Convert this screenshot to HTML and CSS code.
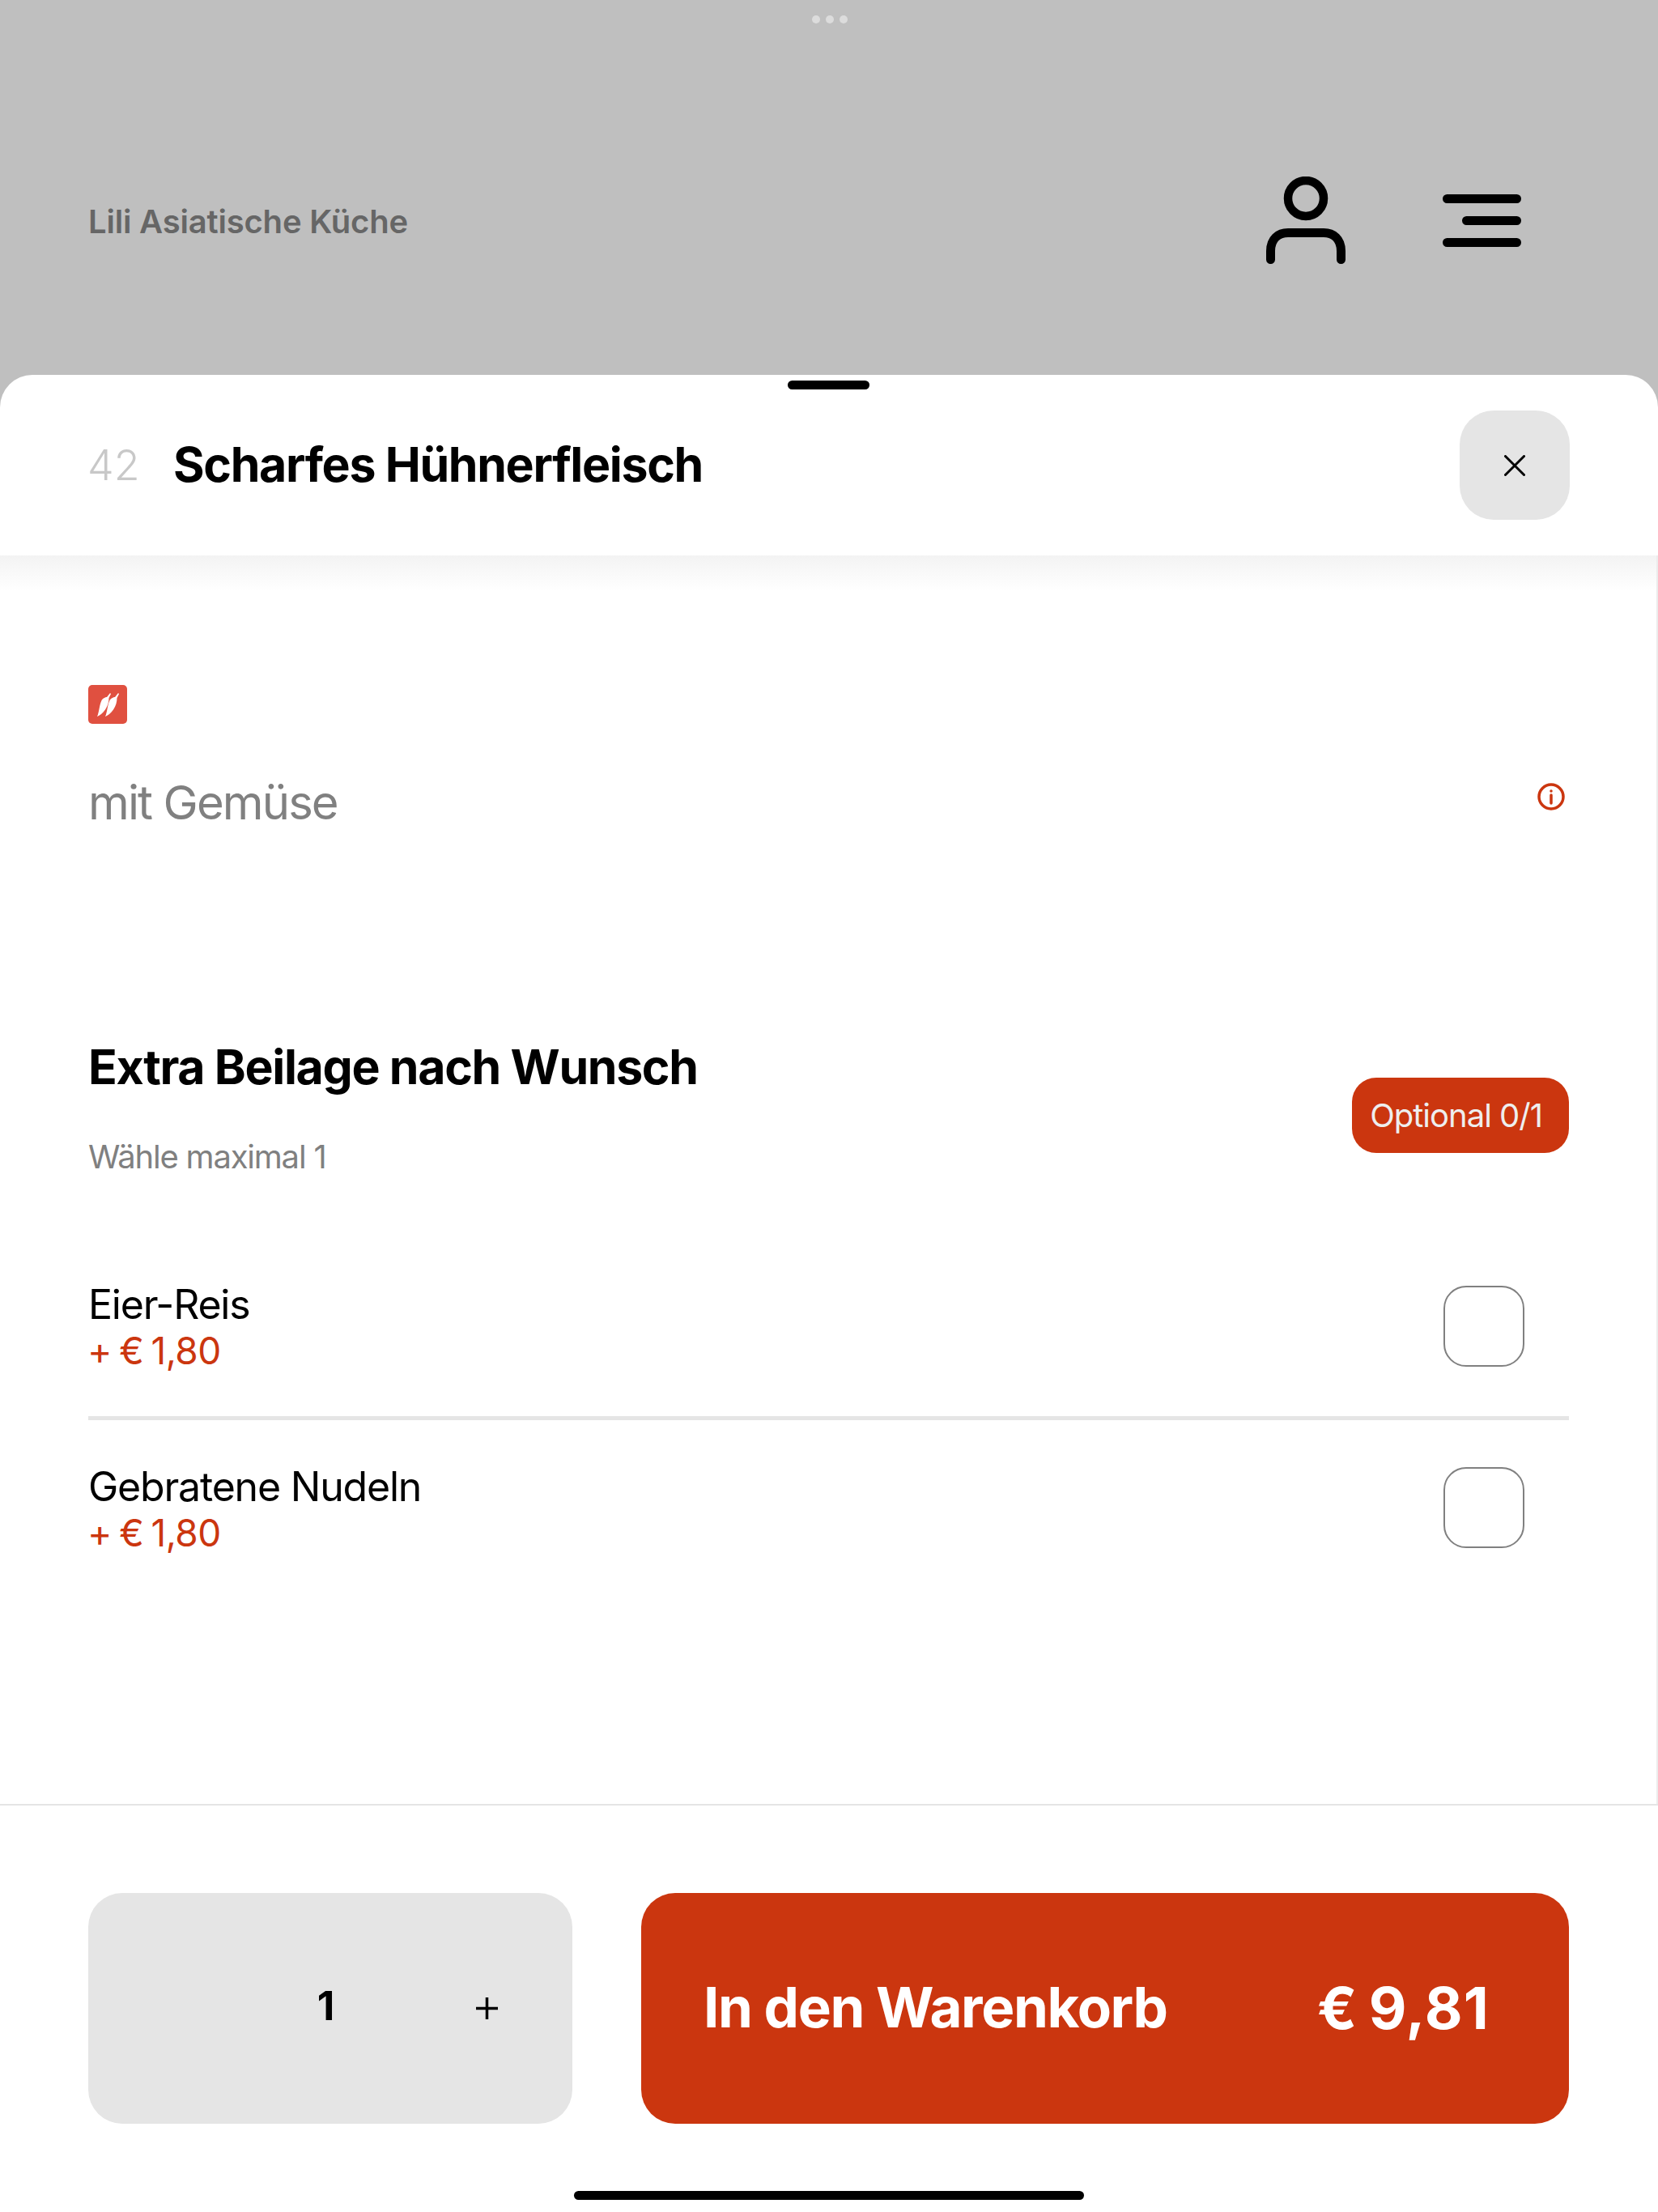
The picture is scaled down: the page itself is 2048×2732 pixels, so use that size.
FILE: index.html
```html
<!DOCTYPE html>
<html lang="de">
<head>
  <meta charset="UTF-8">
  <title>Lili Asiatische Küche</title>
  <link rel="stylesheet" href="styles.css">
</head>
<body>
  <!-- Multitasking dots -->
  <div class="window-dots"><span></span><span></span><span></span></div>

  <!-- Restaurant bar behind the sheet -->
  <header class="top-bar">
    <span class="restaurant-name">Lili Asiatische Küche</span>
    <div class="top-icons">
      <svg class="icon-user" width="98" height="108" viewBox="0 0 98 108" fill="none" stroke="#000" stroke-linecap="round">
        <circle cx="49" cy="27" r="22" stroke-width="10.5"/>
        <path d="M5.500 102.500V92C5.500 77 15 69.500 27 69.500H71C83 69.500 92.500 77 92.500 92V102.500" stroke-width="11"/>
      </svg>
      <svg class="icon-menu" width="97" height="65" viewBox="0 0 97 65" fill="none" stroke="#000" stroke-width="11" stroke-linecap="round">
        <path d="M5.500 5.500H91.500M29.500 32.500H91.500M5.500 59.500H91.500"/>
      </svg>
    </div>
  </header>

  <!-- Product sheet -->
  <main class="sheet">
    <div class="sheet-handle"></div>
    <div class="sheet-header">
      <span class="item-number">42</span>
      <h1 class="item-title">Scharfes Hühnerfleisch</h1>
      <button class="close-btn" aria-label="Schließen">
        <svg width="26" height="26" viewBox="0 0 26 26" fill="none" stroke="#000" stroke-width="3" stroke-linecap="round">
          <path d="M1.500 1.500L24.500 24.500M24.500 1.500L1.500 24.500"/>
        </svg>
      </button>
    </div>

    <div class="sheet-body">
      <div class="spicy-badge">
        <svg width="48" height="48" viewBox="0 0 48 48" fill="#fff">
          <path id="chili" d="M11 39C13.500 34 13.500 25 16.500 19C17.500 17 21 15 23 15L27 10L28 11L25.500 16C25.500 21 24 26 21 30.500C18 34.500 14 38 11 39Z"/>
          <use href="#chili" x="10"/>
        </svg>
      </div>

      <div class="item-desc">
        <span>mit Gemüse</span>
        <svg class="info-icon" width="34" height="34" viewBox="0 0 34 34" fill="none" stroke="#cb360f" stroke-width="3.500">
          <circle cx="17" cy="17" r="15"/>
          <path d="M17 15V25" stroke-linecap="round"/>
          <circle cx="17" cy="10" r="1" fill="#cb360f" stroke-width="1.500"/>
        </svg>
      </div>

      <section class="options">
        <div class="options-head">
          <div>
            <h2>Extra Beilage nach Wunsch</h2>
            <p>Wähle maximal 1</p>
          </div>
          <span class="badge">Optional 0/1</span>
        </div>

        <div class="option-row option-row-divided">
          <div class="option-text">
            <div class="option-name">Eier-Reis</div>
            <div class="option-price">+ € 1,80</div>
          </div>
          <span class="checkbox"></span>
        </div>
        <div class="option-row">
          <div class="option-text">
            <div class="option-name">Gebratene Nudeln</div>
            <div class="option-price">+ € 1,80</div>
          </div>
          <span class="checkbox"></span>
        </div>
      </section>
    </div>

    <!-- Quantity and add to cart -->
    <footer class="sheet-footer">
      <div class="qty">
        <span></span>
        <span class="qty-value">1</span>
        <span class="qty-plus">
          <svg width="27" height="27" viewBox="0 0 27 27" fill="none" stroke="#000" stroke-width="3.500"><path d="M13.500 0V27M0 13.500H27"/></svg>
        </span>
      </div>
      <button class="add-btn">
        <span class="add-label">In den Warenkorb</span>
        <span class="add-price">€ 9,81</span>
      </button>
    </footer>
    <div class="home-bar"></div>
  </main>
</body>
</html>
```

FILE: styles.css
```css
* {
  box-sizing: border-box;
}
html, body {
  margin: 0;
  height: 2732px;
  overflow: hidden;
}
body {
  background-color: #bfbfbf;
  color: #000;
  font-family: Inter, "Liberation Sans", sans-serif;
  display: flex;
  flex-direction: column;
  position: relative;
}
h1, h2, p {
  margin: 0;
}
button {
  border: none;
  font-family: inherit;
  padding: 0;
}
/* Top bar */
.window-dots {
  position: absolute;
  top: 19px;
  left: 1003px;
  display: flex;
  gap: 7px;
}
.window-dots span {
  width: 10px;
  height: 10px;
  border-radius: 50%;
  background-color: #dcdcdc;
}
.top-bar {
  height: 463px;
  padding: 84px 169px 0 109px;
  display: flex;
  justify-content: space-between;
  align-items: center;
}
.restaurant-name {
  color: #666;
  font-size: 40px;
  font-weight: 600;
  letter-spacing: -0.2px;
}
.top-icons {
  display: flex;
  align-items: center;
  gap: 120px;
  margin-bottom: 3px;
}
/* Sheet */
.sheet {
  flex: 1;
  position: relative;
  display: flex;
  flex-direction: column;
  background-color: #fff;
  border-radius: 40px 40px 0 0;
}
.sheet-handle {
  position: absolute;
  top: 7px;
  left: 973px;
  width: 101px;
  height: 11px;
  border-radius: 6px;
  background-color: #000;
}
.sheet-header {
  height: 223px;
  flex-shrink: 0;
  padding: 0 109px 0 108px;
  display: flex;
  align-items: center;
}
.item-number {
  width: 106px;
  color: #c8c8c8;
  font-size: 52px;
  font-weight: 300;
}
.item-title {
  flex: 1;
  margin-bottom: 3px;
  font-size: 59px;
  font-weight: 700;
  letter-spacing: -1.35px;
}
.close-btn {
  width: 136px;
  height: 135px;
  border-radius: 42px;
  background-color: #e5e5e5;
  display: flex;
  align-items: center;
  justify-content: center;
}
/* Body */
.sheet-body {
  flex: 1;
  padding: 160px 108px 0 109px;
  border-right: 2px solid #ececec;
  background: linear-gradient(#f3f3f3, #fff 44px);
}
.spicy-badge {
  width: 48px;
  height: 48px;
  border-radius: 5px;
  background-color: #e05040;
}
.spicy-badge svg {
  display: block;
}
.item-desc {
  margin-top: 62px;
  display: flex;
  justify-content: space-between;
  align-items: center;
  color: #808080;
  font-size: 58px;
  letter-spacing: -1.9px;
  padding-right: 5px;
}
.info-icon {
  margin-bottom: 14px;
}
.options {
  margin-top: 256px;
}
.options-head {
  display: flex;
  justify-content: space-between;
  align-items: flex-start;
}
.options-head h2 {
  font-size: 59px;
  font-weight: 700;
  letter-spacing: -1.35px;
}
.options-head p {
  margin-top: 51px;
  color: #808080;
  font-size: 40px;
  letter-spacing: -1.2px;
}
.badge {
  height: 93px;
  margin-top: 49px;
  padding: 0 33px 0 22px;
  display: flex;
  align-items: center;
  border-radius: 30px;
  background-color: #cb360f;
  color: #eee;
  font-size: 40px;
  letter-spacing: -1px;
}
.option-row {
  height: 219px;
  padding-right: 55px;
  display: flex;
  justify-content: space-between;
  align-items: center;
}
.option-row-divided {
  height: 225px;
  margin-top: 76px;
  border-bottom: 5px solid #e5e5e5;
}
.option-text {
  margin-bottom: 1px;
}
.option-name {
  font-size: 50px;
  letter-spacing: -1.2px;
}
.option-price {
  margin-top: -1px;
  color: #cb360f;
  font-size: 46px;
  letter-spacing: -0.6px;
  word-spacing: -3px;
  margin-left: -1px;
}
.checkbox {
  width: 100px;
  height: 100px;
  margin-bottom: 3px;
  border: 2px solid #808080;
  border-radius: 28px;
}
/* Footer */
.sheet-footer {
  height: 504px;
  flex-shrink: 0;
  padding: 108px 110px 0 109px;
  border-top: 2px solid #e5e5e5;
  display: flex;
  align-items: flex-start;
  gap: 85px;
}
.qty {
  width: 598px;
  height: 285px;
  padding-right: 9px;
  border-radius: 42px;
  background-color: #e5e5e5;
  display: grid;
  grid-template-columns: repeat(3, 1fr);
  align-items: center;
  justify-items: center;
}
.qty-value {
  margin-bottom: 7px;
  margin-right: 2px;
  font-size: 50px;
  font-weight: 700;
}
.qty-plus {
  margin-left: 3px;
}
.qty-plus svg {
  display: block;
}
.add-btn {
  flex: 1;
  height: 285px;
  padding: 0 98px 3px 77px;
  border-radius: 42px;
  background-color: #cb360f;
  color: #fff;
  font-weight: 700;
  display: flex;
  justify-content: space-between;
  align-items: center;
}
.add-label {
  font-size: 69px;
  letter-spacing: -1.35px;
}
.add-price {
  font-size: 72px;
  letter-spacing: 1.2px;
  word-spacing: -5px;
}
.home-bar {
  position: absolute;
  left: 709px;
  bottom: 15px;
  width: 630px;
  height: 11px;
  border-radius: 6px;
  background-color: #000;
}
```
